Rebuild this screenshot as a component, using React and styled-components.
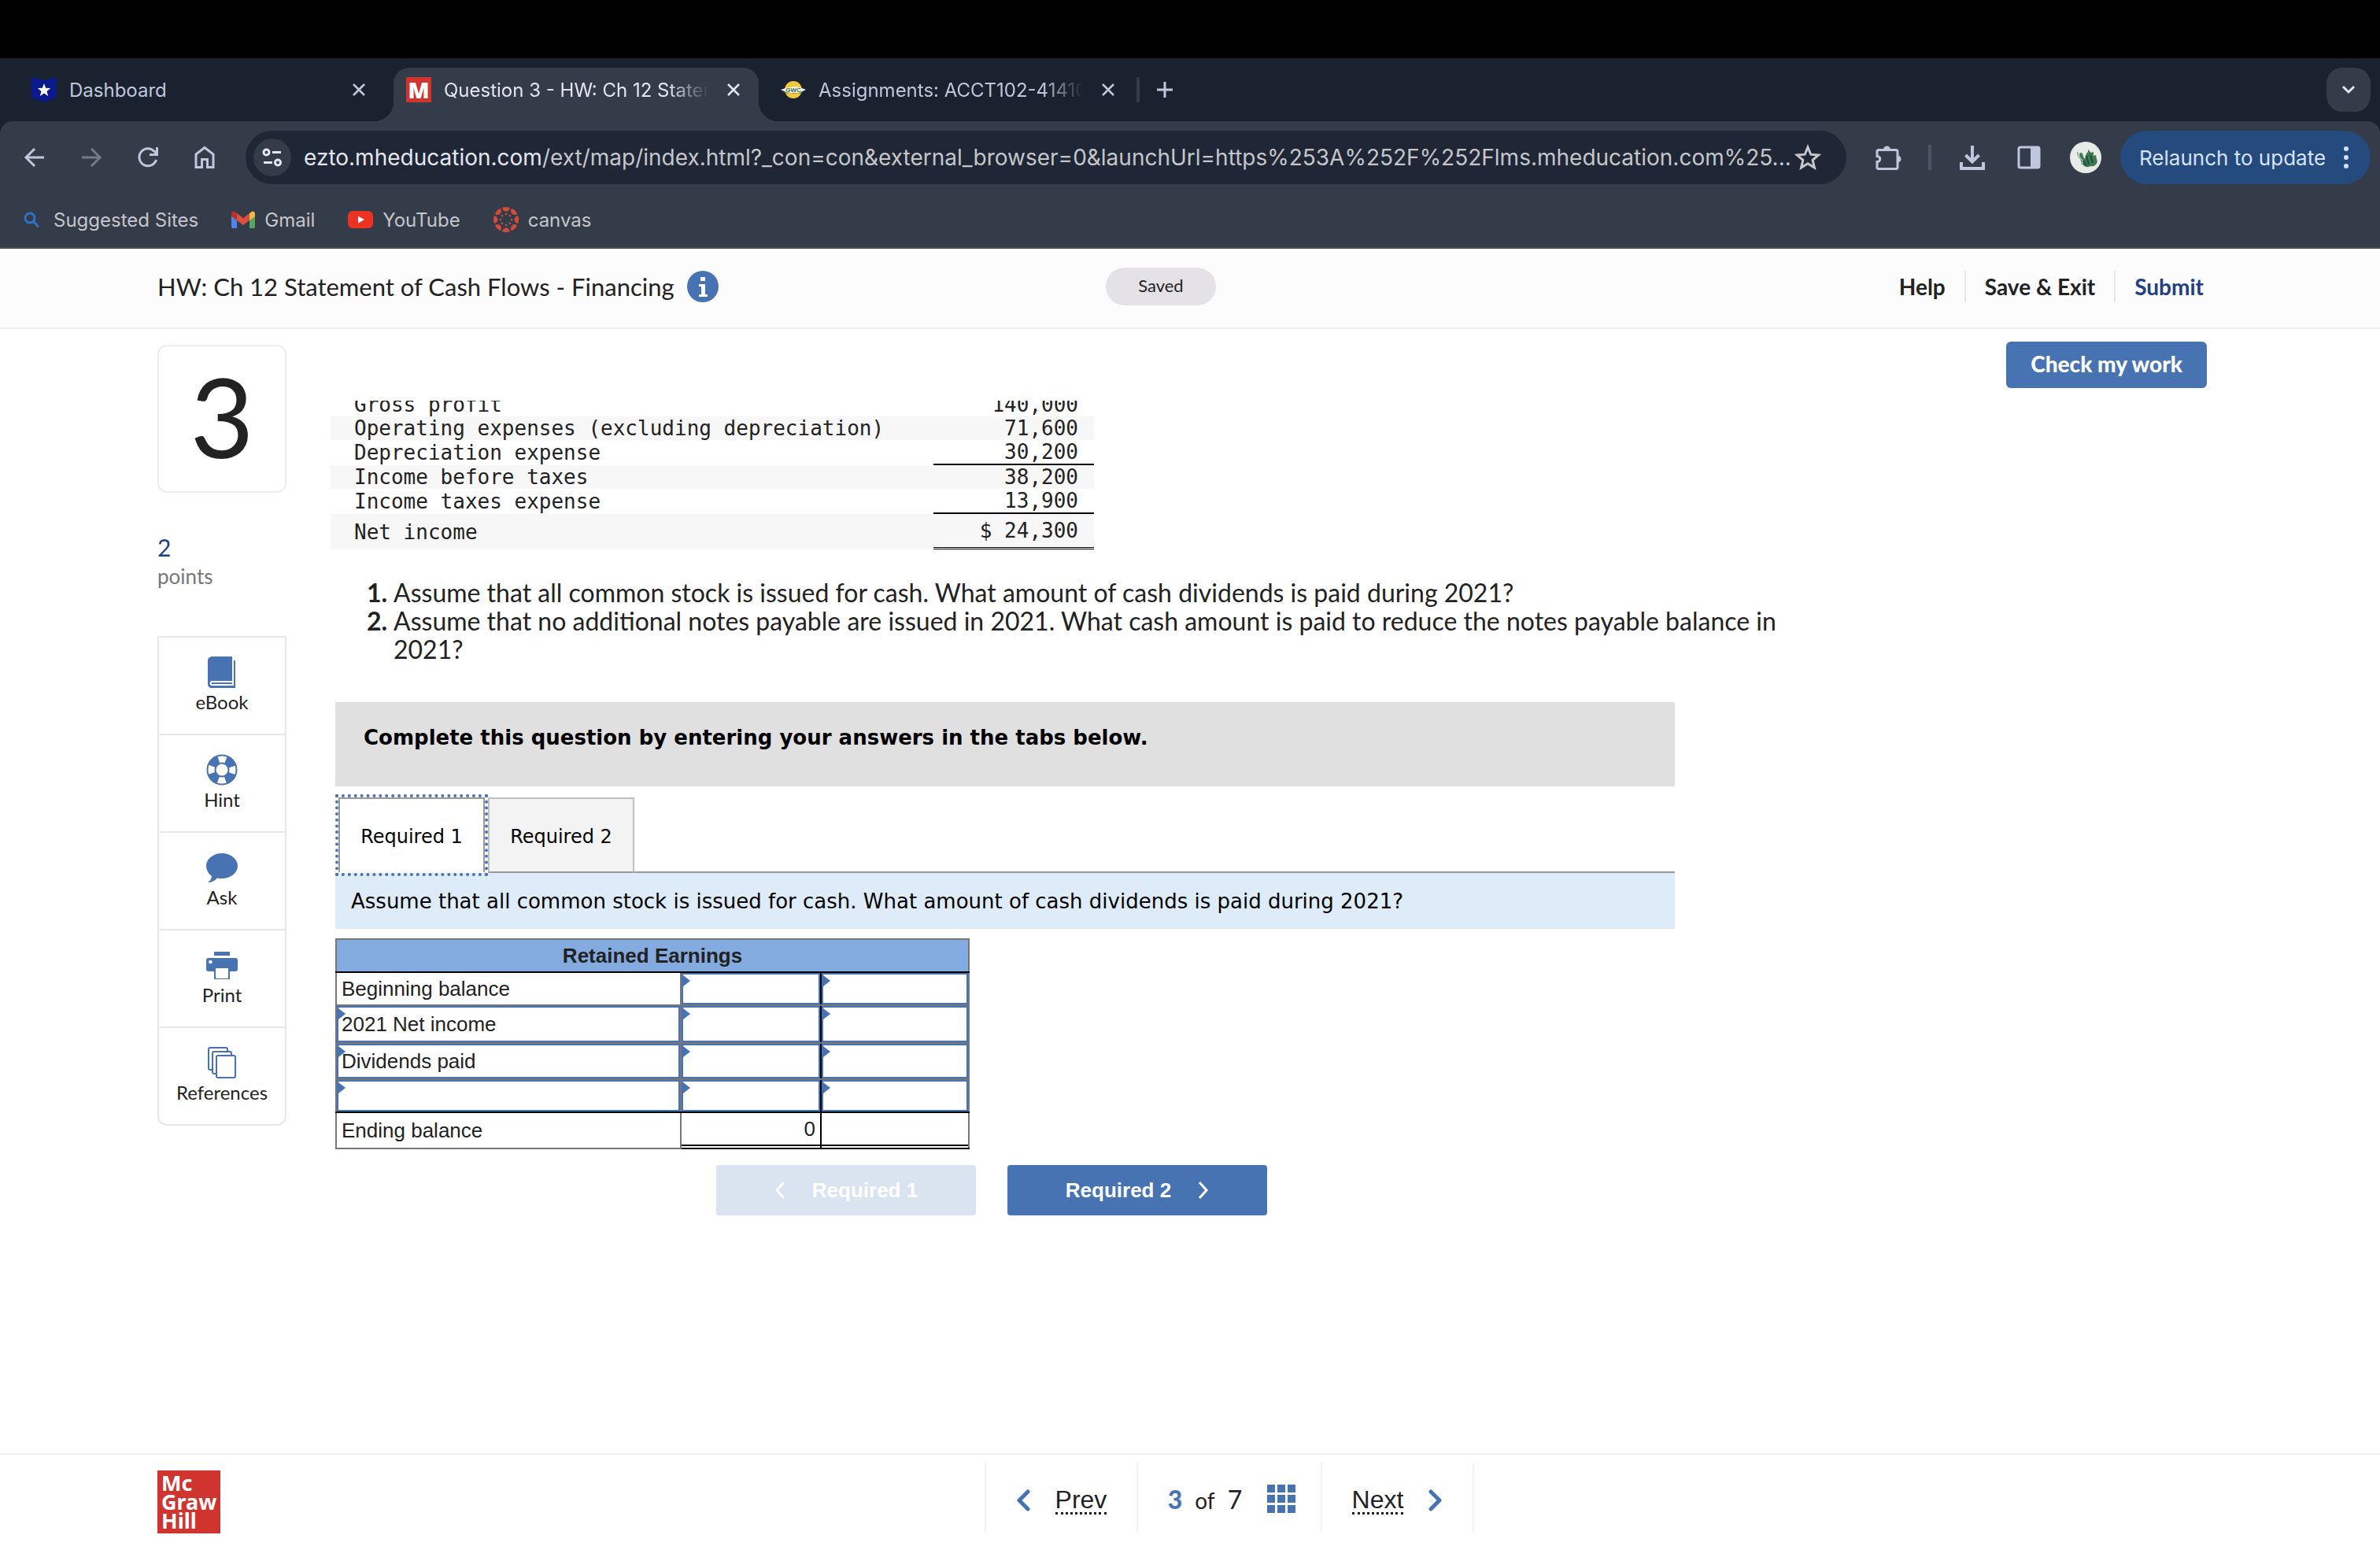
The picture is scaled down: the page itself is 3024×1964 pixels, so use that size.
import { useState } from 'react'
import styled, { createGlobalStyle, css } from 'styled-components'

const BLUE = '#4873b3'

const App = () => {
  const [tab, setTab] = useState(0)

  return (
    <Page>
      <GlobalStyle />
      <Browser />
      <AppHeader />
      <Main>
        <Sidebar />
        <Content>
          <ActionRow>
            <CheckButton>Check my work</CheckButton>
          </ActionRow>
          <QuestionArea>
            <IncomeStatement />
            <Questions>
              <li>Assume that all common stock is issued for cash. What amount of cash dividends is paid during 2021?</li>
              <li>Assume that no additional notes payable are issued in 2021. What cash amount is paid to reduce the notes payable balance in 2021?</li>
            </Questions>
            <AnswerArea>
              <Instruction>Complete this question by entering your answers in the tabs below.</Instruction>
              <TabList role="tablist">
                <TabButton role="tab" aria-selected={tab === 0} $active={tab === 0} onClick={() => setTab(0)}>Required 1</TabButton>
                <TabButton role="tab" aria-selected={tab === 1} $active={tab === 1} onClick={() => setTab(1)}>Required 2</TabButton>
              </TabList>
              <TabPanel role="tabpanel">
                Assume that all common stock is issued for cash. What amount of cash dividends is paid during 2021?
              </TabPanel>
              <AnswerSheet />
              <StepRow>
                <StepButton disabled onClick={() => setTab(0)}>
                  <Chevron left /> Required 1
                </StepButton>
                <StepButton onClick={() => setTab(1)}>
                  Required 2 <Chevron />
                </StepButton>
              </StepRow>
            </AnswerArea>
          </QuestionArea>
        </Content>
      </Main>
      <Footer />
    </Page>
  )
}

export default App;

/* ---------- browser ---------- */

const Browser = () => (
  <BrowserFrame>
    <MenuBar />
    <TabStrip>
      <BrowserTab $first>
        <DashboardIcon />
        <TabTitle>Dashboard</TabTitle>
        <CloseButton />
      </BrowserTab>
      <BrowserTab $active>
        <MIcon />
        <TabTitle $fade>Question 3 - HW: Ch 12 Statem</TabTitle>
        <CloseButton />
      </BrowserTab>
      <BrowserTab>
        <GwcIcon />
        <TabTitle $fade>Assignments: ACCT102-41410</TabTitle>
        <CloseButton />
      </BrowserTab>
      <StripDivider />
      <NewTab aria-label="New tab">
        <Stroke size={24} d="M12 2v20M2 12h20" width={3} />
      </NewTab>
      <TabSearch aria-label="Search tabs">
        <Stroke size={24} d="M5 8l7 7 7-7" width={3} />
      </TabSearch>
    </TabStrip>
    <Toolbar>
      <ToolButton aria-label="Back">
        <Stroke size={28} d="M26 14H4M14 3L3 14l11 11" width={3} />
      </ToolButton>
      <ToolButton aria-label="Forward" $dim>
        <Stroke size={28} d="M2 14h22M14 3l11 11-11 11" width={3} />
      </ToolButton>
      <ToolButton aria-label="Reload">
        <svg width="28" height="28" viewBox="0 0 28 28" fill="none" stroke="currentColor" strokeWidth="3">
          <path d="M24.500 17A11 11 0 1 1 22 6.200L25 9" />
          <path d="M25.500 1v9.500H16" />
        </svg>
      </ToolButton>
      <ToolButton aria-label="Home">
        <svg width="28" height="30" viewBox="0 0 28 30" fill="none" stroke="currentColor" strokeWidth="3">
          <path d="M3 27.500V11L14 2.500 25 11v16.500h-7.500V17.500h-7v10z" />
        </svg>
      </ToolButton>
      <Omnibox>
        <SiteInfo aria-label="Site information">
          <svg width="26" height="24" viewBox="0 0 26 24" fill="none" stroke="currentColor" strokeWidth="3">
            <circle cx="5.500" cy="5.500" r="3.500" />
            <path d="M13 5.500h11M2 18.500h11" />
            <circle cx="20" cy="18.500" r="3.500" />
          </svg>
        </SiteInfo>
        <Url><b>ezto.mheducation.com</b>/ext/map/index.html?_con=con&amp;external_browser=0&amp;launchUrl=https%253A%252F%252Flms.mheducation.com%25...</Url>
        <IconButton aria-label="Bookmark this page">
          <svg width="34" height="34" viewBox="0 0 34 34" fill="none" stroke="currentColor" strokeWidth="3">
            <path d="M17 4l3.800 9.200 9.700.8-7.400 6.400 2.300 9.600L17 24.800 8.600 30l2.300-9.600L3.500 14l9.700-.8z" />
          </svg>
        </IconButton>
      </Omnibox>
      <ToolbarRight>
        <ToolButton aria-label="Extensions">
          <svg width="36" height="36" viewBox="0 0 36 36">
            <path d="M5 10.500a2 2 0 0 1 2-2h22a2 2 0 0 1 2 2v20a2 2 0 0 1-2 2H7a2 2 0 0 1-2-2v-7c5 0 5-7 0-7z" fill="none" stroke="currentColor" strokeWidth="3" />
            <path d="M13 8a4.500 4.500 0 0 1 9 0zM31 15.500a4.500 4.500 0 0 1 0 9z" fill="currentColor" />
          </svg>
        </ToolButton>
        <ToolDivider />
        <ToolButton aria-label="Downloads">
          <Stroke size={34} d="M17 2v20M8.500 14l8.500 8.500 8.500-8.500M3 23v8h28v-8" width={4} />
        </ToolButton>
        <ToolButton aria-label="Side panel">
          <svg width="30" height="30" viewBox="0 0 30 30">
            <rect x="2" y="2" width="26" height="26" rx="2" fill="none" stroke="currentColor" strokeWidth="3" />
            <path d="M17 2h11v26H17z" fill="currentColor" />
          </svg>
        </ToolButton>
        <ToolButton aria-label="Profile">
          <svg width="40" height="40" viewBox="0 0 40 40">
            <circle cx="20" cy="20" r="20" fill="#e8eae8" />
            <path d="M12 15q4-3 5 4l2 3q1-7 4-9l0-3 4 4 3-1v5l3-1q1 6 2 8-2 7-8 6-7 3-11-2-3-5-4-14z" fill="#3a7a55" />
            <path d="M10 13q-1 5 4 9t0 6" fill="none" stroke="#9db5a5" strokeWidth="2" />
            <path d="M21 18l3 11M26 17l3 10M17 24l4 7" stroke="#1f4f36" strokeWidth="2" />
          </svg>
        </ToolButton>
      </ToolbarRight>
      <Relaunch>
        Relaunch to update
        <svg width="6" height="28" viewBox="0 0 6 28" fill="currentColor">
          <circle cx="3" cy="3" r="3" /><circle cx="3" cy="14" r="3" /><circle cx="3" cy="25" r="3" />
        </svg>
      </Relaunch>
    </Toolbar>
    <Bookmarks>
      <Bookmark href="#" $gap={18}>
        <svg width="20" height="20" viewBox="0 0 20 20" fill="none" stroke="#2f73c9" strokeWidth="3">
          <circle cx="8" cy="8" r="6" /><path d="M12 12l7 7" />
        </svg>
        Suggested Sites
      </Bookmark>
      <Bookmark href="#" $gap={12}>
        <svg width="30" height="22" viewBox="0 0 30 22">
          <path d="M0 3v17a2 2 0 0 0 2 2h5V8z" fill="#5083ec" />
          <path d="M30 3v17a2 2 0 0 1-2 2h-5V8z" fill="#58a65c" />
          <path d="M23 3l3-2.500Q30 0 30 4v3l-7 5z" fill="#f1bc42" />
          <path d="M7 3L4 .500Q0 0 0 4v3l7 5z" fill="#b5342b" />
          <path d="M7 3l8 6 8-6v9l-8 6-8-6z" fill="#d95040" />
        </svg>
        Gmail
      </Bookmark>
      <Bookmark href="#" $gap={12}>
        <svg width="32" height="22" viewBox="0 0 32 22">
          <rect width="32" height="22" rx="6" fill="#ea3323" /><path d="M13 6.500l8 4.500-8 4.500z" fill="#fff" />
        </svg>
        YouTube
      </Bookmark>
      <Bookmark href="#" $gap={12}>
        <svg width="32" height="32" viewBox="-16 -16 32 32" fill="#d64b38">
          {[0, 45, 90, 135, 180, 225, 270, 315].map((a) => (
            <g key={a} transform={`rotate(${a})`}>
              <path d="M-5-15Q0-17 5-15 3.500-10.500 0-10.500T-5-15z" />
              <circle cy="-7" r="1.300" />
            </g>
          ))}
        </svg>
        canvas
      </Bookmark>
    </Bookmarks>
  </BrowserFrame>
)

const Stroke = ({ size, d, width }) => (
  <svg width={size} height={size} viewBox={`0 0 ${size} ${size}`} fill="none" stroke="currentColor" strokeWidth={width}>
    <path d={d} />
  </svg>
)

const CloseButton = () => (
  <IconButton aria-label="Close tab">
    <Stroke size={16} d="M1 1l14 14M15 1L1 15" width={2.5} />
  </IconButton>
)

const DashboardIcon = () => (
  <svg width="32" height="32" viewBox="0 0 32 32">
    <path d="M0 0l16 4L32 0v26l-16 6L0 26z" fill="#0a1a8c" />
    <path d="M16 8l2.200 5.800 6 .3-4.700 3.800 1.700 6L16 20.500l-5.200 3.400 1.700-6-4.700-3.800 6-.3z" fill="#fff" />
  </svg>
)

const MIcon = () => <RedTile aria-hidden="true">M</RedTile>

const GwcIcon = () => (
  <svg width="32" height="24" viewBox="0 0 32 24">
    <ellipse cx="16" cy="12" rx="11" ry="11" fill="#f3c83f" />
    <path d="M0 12q16-7 32 0-16 8-32 0z" fill="#fff" />
    <path d="M1 13.500q15 7 30 0l-5 3H6z" fill="#2c6b3f" />
    <text x="16" y="15" textAnchor="middle" fontFamily="Liberation Sans, sans-serif" fontWeight="700" fontSize="8" fill="#2c6b3f">GWC</text>
  </svg>
)

/* ---------- page header, sidebar, footer ---------- */

const AppHeader = () => (
  <Header>
    <HeaderTitle>
      HW: Ch 12 Statement of Cash Flows - Financing
      <IconButton aria-label="Assignment information">
        <svg width="40" height="40" viewBox="0 0 40 40">
          <circle cx="20" cy="20" r="20" fill={BLUE} />
          <path d="M17 8h6v5h-6zM15 17h8v13h3v3H15v-3h3V20h-3z" fill="#fff" />
        </svg>
      </IconButton>
    </HeaderTitle>
    <Saved>Saved</Saved>
    <HeaderNav>
      <HeaderButton>Help</HeaderButton>
      <HeaderButton>Save &amp; Exit</HeaderButton>
      <HeaderButton $blue>Submit</HeaderButton>
    </HeaderNav>
  </Header>
)

const BookIcon = () => (
  <svg width="36" height="40" viewBox="0 0 36 40">
    <path d="M5 0h26v31H5q-2.500.500-2.500 3T5 37h28V5h2v35H4q-4-1-4-5V5q0-4 5-5z" fill={BLUE} />
    <path d="M5 33h26v2H5z" fill={BLUE} />
  </svg>
)

const HintIcon = () => (
  <svg width="40" height="40" viewBox="0 0 40 40" fill="none">
    <circle cx="20" cy="20" r="13.500" stroke={BLUE} strokeWidth="12" />
    <circle cx="20" cy="20" r="13.500" stroke="#fff" strokeWidth="8" strokeDasharray="9.200 12" strokeDashoffset="4.600" />
  </svg>
)

const AskIcon = () => (
  <svg width="40" height="40" viewBox="0 0 40 40">
    <path d="M20 2c11 0 20 7 20 16s-9 16-20 16c-2 0-4 0-6-.500C11 37 7 39 2 39c3-2 5-5 5-8-4-3-7-8-7-13C0 9 9 2 20 2z" fill={BLUE} />
  </svg>
)

const PrintIcon = () => (
  <svg width="40" height="40" viewBox="0 0 40 40">
    <path d="M10 3h20v5H10zM3 11h34q3 0 3 3v11q0 3-3 3h-7v10H10V28H3q-3 0-3-3V14q0-3 3-3z" fill={BLUE} />
    <path d="M12 24h16v13H12z" fill="#fff" />
    <circle cx="5.500" cy="16" r="2.300" fill="#fff" />
  </svg>
)

const ReferencesIcon = () => (
  <svg width="36" height="40" viewBox="0 0 36 40" fill="#fff" stroke={BLUE} strokeWidth="2">
    <rect x="1" y="1" width="24" height="28" rx="2" />
    <rect x="6" y="6" width="24" height="28" rx="2" />
    <rect x="11" y="11" width="24" height="28" rx="2" />
  </svg>
)

const TOOLS = [
  ['eBook', BookIcon],
  ['Hint', HintIcon],
  ['Ask', AskIcon],
  ['Print', PrintIcon],
  ['References', ReferencesIcon],
]

const Sidebar = () => (
  <SidebarColumn>
    <QuestionNumber>3</QuestionNumber>
    <Points>
      <strong>2</strong>
      points
    </Points>
    <ToolList>
      {TOOLS.map(([name, Icon]) => (
        <li key={name}>
          <SideTool><Icon />{name}</SideTool>
        </li>
      ))}
    </ToolList>
  </SidebarColumn>
)

const Chevron = ({ left }) => (
  <svg width="14" height="22" viewBox="0 0 14 22" fill="none" stroke="currentColor" strokeWidth="3">
    <path d={left ? 'M12 1L3 11l9 10' : 'M2 1l9 10-9 10'} />
  </svg>
)

const PageChevron = ({ left }) => (
  <svg width="18" height="28" viewBox="0 0 18 28" fill="none" stroke={BLUE} strokeWidth="5" strokeLinecap="round" strokeLinejoin="round">
    <path d={left ? 'M15 3L4 14l11 11' : 'M3 3l11 11L3 25'} />
  </svg>
)

const Footer = () => (
  <FooterBar>
    <Logo>Mc<br />Graw<br />Hill</Logo>
    <Pager>
      <PagerCell><PageChevron left /><PagerLink href="#">Prev</PagerLink></PagerCell>
      <PagerCell $wide>
        <Position><b>3</b><small>of</small><span>7</span></Position>
        <IconButton aria-label="All questions">
          <svg width="36" height="36" viewBox="0 0 36 36" fill={BLUE}>
            {[0, 13, 26].map((y) => [0, 13, 26].map((x) => <rect key={`${x}-${y}`} x={x} y={y} width="10" height="10" />))}
          </svg>
        </IconButton>
      </PagerCell>
      <PagerCell><PagerLink href="#">Next</PagerLink><PageChevron /></PagerCell>
    </Pager>
  </FooterBar>
)

/* ---------- question tables ---------- */

const INCOME = [
  { label: 'Gross profit', value: '140,000' },
  { label: 'Operating expenses (excluding depreciation)', value: '71,600', shaded: true },
  { label: 'Depreciation expense', value: '30,200', line: 'solid' },
  { label: 'Income before taxes', value: '38,200', shaded: true },
  { label: 'Income taxes expense', value: '13,900', line: 'solid' },
  { label: 'Net income', value: '$ 24,300', shaded: true, line: 'double', tall: true },
]

const IncomeStatement = () => (
  <IncomeTable>
    <tbody>
      {INCOME.map((row) => (
        <IncomeRow key={row.label} $shaded={row.shaded} $tall={row.tall}>
          <td>{row.label}</td>
          <AmountCell $line={row.line}>{row.value}</AmountCell>
        </IncomeRow>
      ))}
    </tbody>
  </IncomeTable>
)

const ROWS = [
  { label: 'Beginning balance', height: 40, fixed: true },
  { label: '2021 Net income', height: 46 },
  { label: 'Dividends paid', height: 44 },
  { label: '', height: 40, last: true },
]

const AnswerSheet = () => (
  <SheetTable>
    <colgroup>
      <col width="438" />
      <col width="178" />
      <col />
    </colgroup>
    <thead>
      <tr><SheetHead colSpan={3}>Retained Earnings</SheetHead></tr>
    </thead>
    <tbody>
      {ROWS.map((row, i) => (
        <tr key={i}>
          {row.fixed
            ? <SheetCell $last={row.last}>{row.label}</SheetCell>
            : <EntryCell $last={row.last}><Entry $height={row.height} defaultValue={row.label} aria-label={`Row ${i + 1} account`} /></EntryCell>}
          <EntryCell $last={row.last} $dark><Entry $height={row.height} aria-label={`Row ${i + 1} debit`} /></EntryCell>
          <EntryCell $last={row.last}><Entry $height={row.height} aria-label={`Row ${i + 1} credit`} /></EntryCell>
        </tr>
      ))}
      <tr>
        <SheetCell>Ending balance</SheetCell>
        <TotalCell $dark><Total>0</Total></TotalCell>
        <TotalCell><Total /></TotalCell>
      </tr>
    </tbody>
  </SheetTable>
)

/* ---------- styles ---------- */

const GlobalStyle = createGlobalStyle`
  *, *::before, *::after {
    box-sizing: border-box;
  }
  body {
    margin: 0;
    background: #fff;
    color: #222;
    font-family: Lato, sans-serif;
  }
  button, input {
    font: inherit;
    color: inherit;
    border: 0;
    padding: 0;
    background: none;
  }
  svg {
    display: block;
    flex-shrink: 0;
  }
`

const Page = styled.div`
  min-height: 100vh;
  display: flex;
  flex-direction: column;
`

const BrowserFrame = styled.div`
  font-family: Inter, Roboto, sans-serif;
  font-size: 24px;
  background: #1a2230;
`

const MenuBar = styled.div`
  height: 74px;
  background: #000;
`

const TabStrip = styled.div`
  height: 80px;
  padding: 12px 12px 0 24px;
  display: flex;
  color: #bfc7dc;
`

const BrowserTab = styled.div`
  width: ${(p) => (p.$first ? 476 : p.$active ? 464 : 480)}px;
  height: 68px;
  padding: 0 ${(p) => (p.$active ? 24 : 36)}px 12px 16px;
  display: flex;
  align-items: center;
  gap: 16px;
  ${(p) => !p.$first && !p.$active && css`
    padding: 0 28px 12px 28px;
  `}
  ${(p) => p.$active && css`
    position: relative;
    color: #e3e6ee;
    background: #343c4a;
    border-radius: 20px 20px 0 0;
    &::before, &::after {
      content: '';
      position: absolute;
      bottom: 0;
      width: 24px;
      height: 24px;
    }
    &::before {
      right: 100%;
      background: radial-gradient(circle at 0 0, transparent 24px, #343c4a 24px);
    }
    &::after {
      left: 100%;
      background: radial-gradient(circle at 100% 0, transparent 24px, #343c4a 24px);
    }
  `}
`

const TabTitle = styled.span`
  flex: 1;
  overflow: hidden;
  white-space: nowrap;
  ${(p) => p.$fade && css`
    margin-right: 8px;
    mask-image: linear-gradient(90deg, #000 85%, transparent);
  `}
`

const RedTile = styled.span`
  width: 32px;
  height: 32px;
  background: #d0342f;
  color: #fff;
  font-family: 'Open Sans', sans-serif;
  font-weight: 800;
  font-size: 28px;
  line-height: 32px;
  text-align: center;
`

const IconButton = styled.button`
  display: flex;
  align-items: center;
`

const NewTab = styled(IconButton)`
  height: 56px;
`

const StripDivider = styled.span`
  width: 4px;
  height: 32px;
  margin: 12px 20px 0 0;
  background: #343c4a;
`

const TabSearch = styled.button`
  width: 56px;
  height: 56px;
  margin-left: auto;
  border-radius: 20px;
  background: #343c4a;
  color: #e3e6ee;
  display: flex;
  align-items: center;
  justify-content: center;
`

const Toolbar = styled.div`
  height: 92px;
  padding: 0 12px 0 8px;
  border-radius: 16px 16px 0 0;
  background: #343c4a;
  color: #bfc7dc;
  display: flex;
  align-items: center;
`

const ToolButton = styled(IconButton)`
  width: 72px;
  justify-content: center;
  color: ${(p) => (p.$dim ? '#747b87' : '#bfc7dc')};
`

const Omnibox = styled.div`
  flex: 1;
  min-width: 0;
  height: 68px;
  margin-left: 16px;
  padding: 0 32px 0 10px;
  border-radius: 34px;
  background: #1f2636;
  color: #c5c6c9;
  display: flex;
  align-items: center;
`

const SiteInfo = styled.button`
  width: 48px;
  height: 48px;
  flex-shrink: 0;
  border-radius: 50%;
  background: #343c4a;
  color: #e3e6ee;
  display: flex;
  align-items: center;
  justify-content: center;
`

const Url = styled.span`
  flex: 1;
  margin-left: 16px;
  overflow: hidden;
  white-space: nowrap;
  font-size: 28px;
  line-height: 36px;
  b {
    font-weight: 400;
    color: #e3e6ee;
  }
`

const ToolbarRight = styled.div`
  display: flex;
  align-items: center;
  margin: 0 8px 0 16px;
`

const ToolDivider = styled.span`
  width: 4px;
  height: 32px;
  margin: 0 16px;
  background: #4c5566;
`

const Relaunch = styled.button`
  width: 318px;
  height: 68px;
  padding: 0 28px 0 24px;
  border-radius: 34px;
  background: #254a7d;
  color: #d5e2fb;
  font-size: 26px;
  white-space: nowrap;
  display: flex;
  align-items: center;
  justify-content: space-between;
`

const Bookmarks = styled.div`
  height: 70px;
  padding: 0 30px 2px;
  border-bottom: 2px solid #4a4c54;
  background: #343c4a;
  display: flex;
  align-items: center;
  gap: 42px;
`

const Bookmark = styled.a`
  color: #c5c6c9;
  text-decoration: none;
  display: flex;
  align-items: center;
  gap: ${(p) => p.$gap}px;
`

const Header = styled.header`
  height: 102px;
  padding: 0 224px 4px 200px;
  background: #fcfcfd;
  border-bottom: 2px solid #eee;
  display: grid;
  grid-template-columns: 24fr auto 25fr;
  align-items: center;
`

const HeaderTitle = styled.div`
  font-size: 31px;
  line-height: 40px;
  display: flex;
  align-items: center;
  gap: 16px;
`

const Saved = styled.span`
  width: 140px;
  height: 48px;
  border-radius: 24px;
  background: #e4e2e6;
  font-size: 22px;
  line-height: 46px;
  text-align: center;
`

const HeaderNav = styled.nav`
  display: flex;
  justify-content: flex-end;
`

const HeaderButton = styled.button`
  height: 40px;
  padding: 0 24px;
  font-size: 28px;
  font-weight: 700;
  color: ${(p) => (p.$blue ? '#1f4183' : '#222')};
  & + & {
    border-left: 2px solid #e8e8e8;
  }
  &:last-child {
    padding-right: 0;
  }
`

const Main = styled.main`
  padding: 0 220px 0 200px;
  display: flex;
  gap: 56px;
`

const SidebarColumn = styled.aside`
  width: 164px;
  flex-shrink: 0;
  padding-top: 20px;
`

const QuestionNumber = styled.div`
  height: 188px;
  border: 2px solid #eee;
  border-radius: 12px;
  font-size: 140px;
  line-height: 176px;
  text-align: center;
`

const Points = styled.div`
  margin: 50px 0 58px;
  font-size: 26px;
  line-height: 36px;
  color: #777;
  strong {
    display: block;
    font-weight: 400;
    font-size: 30px;
    line-height: 38px;
    color: #1f4183;
  }
`

const ToolList = styled.ul`
  margin: 0;
  padding: 0;
  list-style: none;
  border: 2px solid #e8e8e8;
  border-radius: 0 0 12px 12px;
  li + li {
    border-top: 2px solid #e8e8e8;
  }
`

const SideTool = styled.button`
  width: 100%;
  height: 122px;
  padding-top: 24px;
  font-size: 24px;
  line-height: 36px;
  display: flex;
  flex-direction: column;
  align-items: center;
`

const Content = styled.div`
  flex: 1;
  min-width: 0;
`

const ActionRow = styled.div`
  padding: 16px 0;
  display: flex;
  justify-content: flex-end;
`

const CheckButton = styled.button`
  height: 59px;
  padding: 0 31px 4px;
  border-radius: 6px;
  background: ${BLUE};
  color: #fff;
  font-size: 28px;
  font-weight: 900;
`

const QuestionArea = styled.section`
  overflow: hidden;
`

const IncomeTable = styled.table`
  width: 970px;
  margin-top: -10px;
  border-spacing: 0;
  font-family: 'DejaVu Sans Mono', monospace;
  font-size: 26px;
  line-height: 30px;
  td {
    padding: 0 0 0 30px;
  }
`

const IncomeRow = styled.tr`
  height: ${(p) => (p.$tall ? 45 : 30)}px;
  background: ${(p) => (p.$shaded ? '#f7f7f7' : 'transparent')};
`

const AmountCell = styled.td`
  width: 204px;
  && {
    padding: 0 20px 0 0;
  }
  text-align: right;
  ${(p) => p.$line === 'solid' && css`
    border-bottom: 2px solid #000;
  `}
  ${(p) => p.$line === 'double' && css`
    border-bottom: 3px double #000;
  `}
`

const Questions = styled.ol`
  width: 1900px;
  max-width: 100%;
  margin: 37px 0 49px;
  padding-left: 80px;
  font-size: 32px;
  line-height: 36px;
  li::marker {
    font-weight: 700;
  }
`

const AnswerArea = styled.div`
  max-width: 1702px;
  margin-left: 6px;
  font-family: 'DejaVu Sans', sans-serif;
  font-size: 26px;
  color: #000;
`

const Instruction = styled.p`
  height: 107px;
  margin: 0 0 14px;
  padding: 28px 36px;
  background: #e0e0e0;
  font-weight: 700;
  line-height: 34px;
`

const TabList = styled.div`
  padding-left: 4px;
  display: flex;
  gap: 4px;
  &::after {
    content: '';
    flex: 1;
    margin-left: -4px;
    border-bottom: 2px solid #999;
  }
`

const TabButton = styled.button`
  width: 186px;
  height: 96px;
  padding-top: 4px;
  font-size: 24px;
  border: 2px solid #c0c0c0;
  border-bottom-color: #999;
  background: #f3f3f3;
  ${(p) => p.$active && css`
    border-color: #999;
    border-bottom-color: #fff;
    background: #fff;
    outline: 4px dotted ${BLUE};
  `}
`

const TabPanel = styled.div`
  padding: 19px 20px 18px;
  background: #deebf8;
  line-height: 34px;
`

const SheetTable = styled.table`
  width: 806px;
  margin-top: 12px;
  table-layout: fixed;
  border-collapse: collapse;
  font-family: 'Liberation Sans', sans-serif;
  color: #222;
`

const SheetHead = styled.th`
  height: 42px;
  padding: 0;
  border: 2px solid #777;
  border-bottom-color: #000;
  background: #84abdf;
`

const SheetCell = styled.td`
  padding: 0 6px;
  border: 2px solid #777;
  ${(p) => p.$last && css`
    border-bottom-color: #000;
  `}
  ${(p) => p.$dark && css`
    border-right-color: #000;
  `}
`

const EntryCell = styled(SheetCell)`
  position: relative;
  padding: 0;
  &::before {
    content: '';
    position: absolute;
    top: 3px;
    left: 2px;
    border: solid transparent;
    border-width: 7px 0 7px 9px;
    border-left-color: ${BLUE};
  }
`

const Entry = styled.input`
  display: block;
  width: 100%;
  height: ${(p) => p.$height}px;
  padding: 0 4px;
  border: 2px solid ${BLUE};
  border-radius: 0;
`

const TotalCell = styled(SheetCell)`
  padding: 0;
  border-bottom-color: #000;
  text-align: right;
`

const Total = styled.output`
  display: block;
  height: 42px;
  margin-bottom: 2px;
  padding-right: 6px;
  border-bottom: 2px solid #000;
  line-height: 40px;
`

const StepRow = styled.div`
  margin-top: 20px;
  padding-left: 484px;
  display: flex;
  gap: 40px;
`

const StepButton = styled.button`
  width: 330px;
  height: 64px;
  border-radius: 4px;
  background: ${BLUE};
  color: #fff;
  font-family: 'Liberation Sans', sans-serif;
  font-weight: 700;
  display: flex;
  align-items: center;
  justify-content: center;
  gap: 34px;
  &:disabled {
    background: #dae3f0;
  }
`

const FooterBar = styled.footer`
  margin-top: auto;
  height: 118px;
  padding: 10px 0 0 200px;
  border-top: 2px solid #f2f2f2;
  display: grid;
  grid-template-columns: 21fr auto 23fr;
  align-items: start;
`

const Logo = styled.div`
  width: 80px;
  height: 80px;
  margin-top: 10px;
  padding: 4px 5px;
  background: #d0342f;
  color: #fff;
  font-family: 'Noto Sans', sans-serif;
  font-weight: 700;
  font-size: 27px;
  line-height: 24px;
`

const Pager = styled.nav`
  display: flex;
  border-right: 2px solid #f2f2f2;
`

const PagerCell = styled.div`
  width: ${(p) => (p.$wide ? 234 : 193)}px;
  height: 88px;
  padding: ${(p) => (p.$wide ? '4px 0 0 6px' : '8px 0 0')};
  border-left: 2px solid #f2f2f2;
  display: flex;
  align-items: center;
  justify-content: center;
  gap: 32px;
`

const PagerLink = styled.a`
  color: #222;
  font-family: 'Liberation Sans', sans-serif;
  font-size: 32px;
  line-height: 32px;
  text-decoration: none;
  border-bottom: 3px dotted #222;
`

const Position = styled.span`
  font-size: 32px;
  display: flex;
  align-items: baseline;
  gap: 16px;
  b {
    font-weight: 900;
    color: ${BLUE};
  }
  small {
    font-size: 28px;
  }
`
